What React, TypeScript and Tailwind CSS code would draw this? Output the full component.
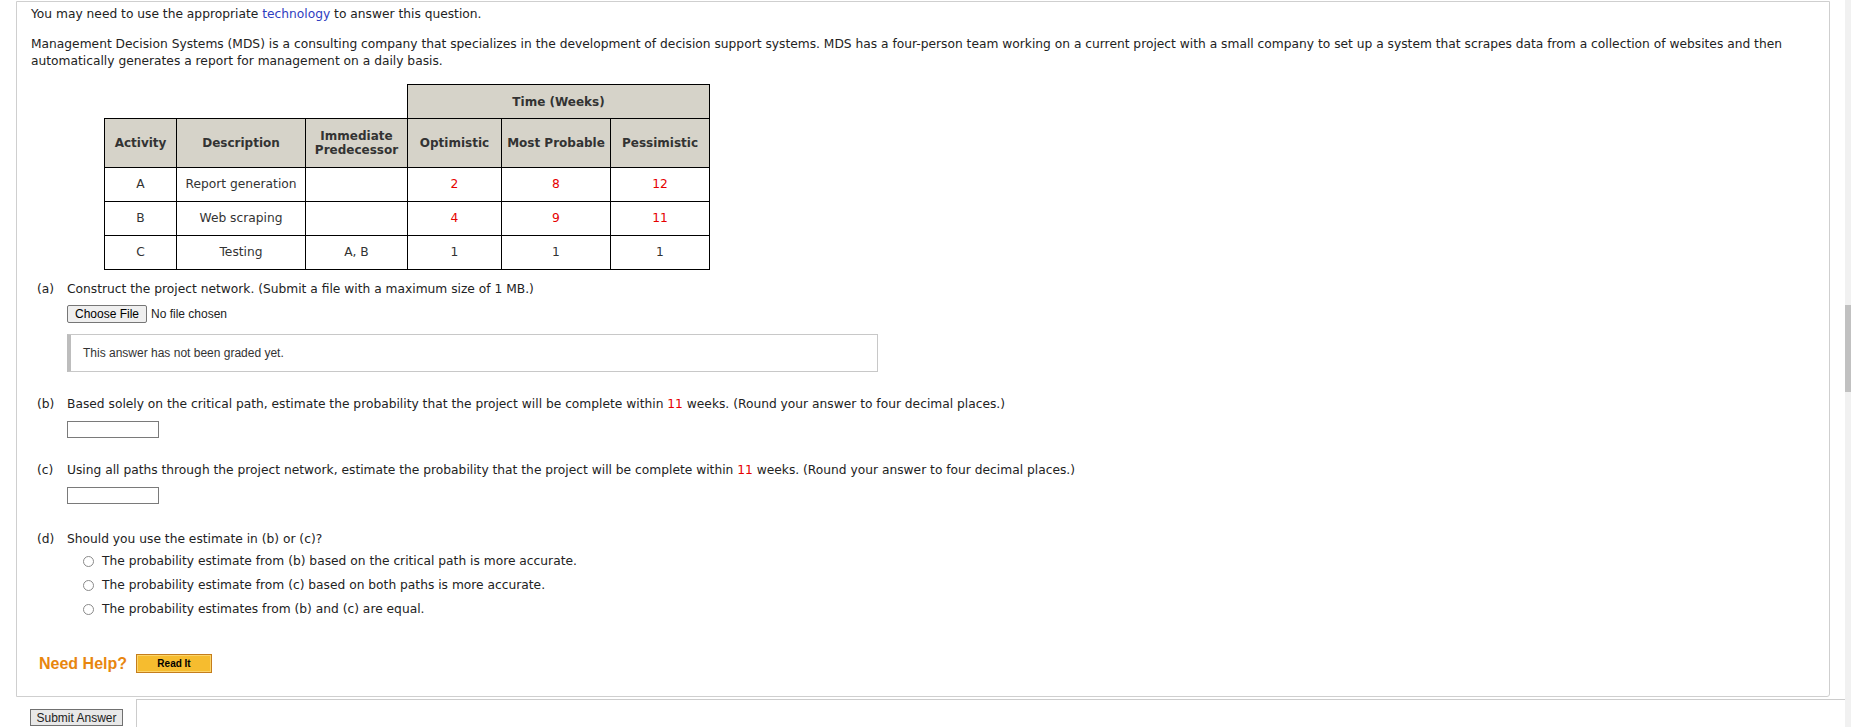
const verdana = { fontFamily: '"DejaVu Sans", Verdana, sans-serif' };

type Row = { act: string; desc: string; pred: string; o: string; m: string; p: string; red: boolean };

const rows: Row[] = [
  { act: 'A', desc: 'Report generation', pred: '', o: '2', m: '8', p: '12', red: true },
  { act: 'B', desc: 'Web scraping', pred: '', o: '4', m: '9', p: '11', red: true },
  { act: 'C', desc: 'Testing', pred: 'A, B', o: '1', m: '1', p: '1', red: false },
];

const choices = [
  'The probability estimate from (b) based on the critical path is more accurate.',
  'The probability estimate from (c) based on both paths is more accurate.',
  'The probability estimates from (b) and (c) are equal.',
];

function Part({ label, children }: { label: string; children: React.ReactNode }) {
  return (
    <div className="flex">
      <span className="w-[36px] shrink-0 pl-[6px]">{label}</span>
      <div className="flex-1">{children}</div>
    </div>
  );
}

function AnswerBox() {
  return <div className="mt-[8px] w-[92px] h-[17px] border border-[#7a7a7a] bg-white" />;
}

export default function App() {
  const th = 'border border-black bg-[#d6d3c9] font-bold text-[12px] text-[#333] text-center px-1 leading-[14px]';
  const td = 'border border-black text-center text-[#333]';

  return (
    <div className="flex h-[727px] overflow-hidden bg-white text-[12.25px] text-[#222]" style={verdana}>
      <div className="flex-1 min-w-0">
        <div className="ml-[16px] mr-[15px] mt-[1px] h-[696px] border border-[#cfcfcf] rounded-br-[3px] pl-[14px] pt-[4px] leading-[17px]">
          <p>
            You may need to use the appropriate <span className="text-[#2f3dbf]">technology</span> to answer this question.
          </p>
          <p className="mt-[13px] pr-[20px]">
            Management Decision Systems (MDS) is a consulting company that specializes in the development of decision support systems. MDS has a four-person team working on a current project with a small company to set up a system that scrapes data from a collection of websites and then automatically generates a report for management on a daily basis.
          </p>

          <table className="mt-[14px] ml-[73px] table-fixed border-collapse">
            <colgroup>
              <col className="w-[72px]" />
              <col className="w-[129px]" />
              <col className="w-[102px]" />
              <col className="w-[94px]" />
              <col className="w-[109px]" />
              <col className="w-[99px]" />
            </colgroup>
            <thead>
              <tr className="h-[34px]">
                <th colSpan={3} />
                <th colSpan={3} className={th}>Time (Weeks)</th>
              </tr>
              <tr className="h-[49px]">
                <th className={th}>Activity</th>
                <th className={th}>Description</th>
                <th className={th}>Immediate<br />Predecessor</th>
                <th className={th}>Optimistic</th>
                <th className={th}>Most Probable</th>
                <th className={th}>Pessimistic</th>
              </tr>
            </thead>
            <tbody>
              {rows.map(r => (
                <tr key={r.act} className="h-[34px]">
                  <td className={td}>{r.act}</td>
                  <td className={td}>{r.desc}</td>
                  <td className={td}>{r.pred}</td>
                  <td className={`${td} ${r.red ? 'text-[#e60000]' : ''}`}>{r.o}</td>
                  <td className={`${td} ${r.red ? 'text-[#e60000]' : ''}`}>{r.m}</td>
                  <td className={`${td} ${r.red ? 'text-[#e60000]' : ''}`}>{r.p}</td>
                </tr>
              ))}
            </tbody>
          </table>

          <div className="mt-[11px]">
            <Part label="(a)">
              <p>Construct the project network. (Submit a file with a maximum size of 1 MB.)</p>
              <div className="mt-[7px] flex items-center gap-[4px] font-['Liberation_Sans',Arial,sans-serif] text-[12px]">
                <button className="h-[18px] w-[80px] border border-[#767676] rounded-[2px] bg-[#efefef] text-black leading-none">Choose File</button>
                <span className="text-[#222]">No file chosen</span>
              </div>
              <div className="mt-[11px] w-[811px] h-[38px] border border-[#c8c8c8] border-l-[4px] border-l-[#bdbdbd] pl-[12px] flex items-center font-['Liberation_Sans',Arial,sans-serif] text-[12px] text-[#333]">
                This answer has not been graded yet.
              </div>
            </Part>
          </div>

          <div className="mt-[24px]">
            <Part label="(b)">
              <p>Based solely on the critical path, estimate the probability that the project will be complete within <span className="text-[#e60000]">11</span> weeks. (Round your answer to four decimal places.)</p>
              <AnswerBox />
            </Part>
          </div>

          <div className="mt-[24px]">
            <Part label="(c)">
              <p>Using all paths through the project network, estimate the probability that the project will be complete within <span className="text-[#e60000]">11</span> weeks. (Round your answer to four decimal places.)</p>
              <AnswerBox />
            </Part>
          </div>

          <div className="mt-[27px]">
            <Part label="(d)">
              <p>Should you use the estimate in (b) or (c)?</p>
              <div className="mt-[5px] ml-[16px] flex flex-col gap-[7px]">
                {choices.map(c => (
                  <label key={c} className="flex items-center gap-[8px]">
                    <span className="w-[11px] h-[11px] rounded-full border border-[#8a8a8a] bg-white" />
                    <span>{c}</span>
                  </label>
                ))}
              </div>
            </Part>
          </div>

          <div className="mt-[36px] ml-[8px] flex items-center gap-[9px] font-['Liberation_Sans',Arial,sans-serif]">
            <span className="text-[16px] font-bold text-[#e8860f]">Need Help?</span>
            <button className="h-[19px] w-[76px] border border-[#c57d1c] bg-[#f6bc2f] shadow-[inset_0_0_0_1px_#fbd56a] text-[10px] font-bold text-black leading-none">Read It</button>
          </div>
        </div>

        <div className="flex items-start mt-[2px]">
          <button className="ml-[30px] mt-[10px] h-[17px] w-[93px] border border-[#707070] bg-[#e8e8e8] font-['Liberation_Sans',Arial,sans-serif] text-[12px] text-[#222] leading-none">Submit Answer</button>
          <div className="ml-[13px] flex-1 h-[40px] border-l border-t border-[#cccccc]" />
        </div>
      </div>

      <div className="w-[6px] shrink-0 bg-[#f1f1f1]">
        <div className="mt-[305px] h-[87px] bg-[#c1c1c1]" />
      </div>
    </div>
  );
}
